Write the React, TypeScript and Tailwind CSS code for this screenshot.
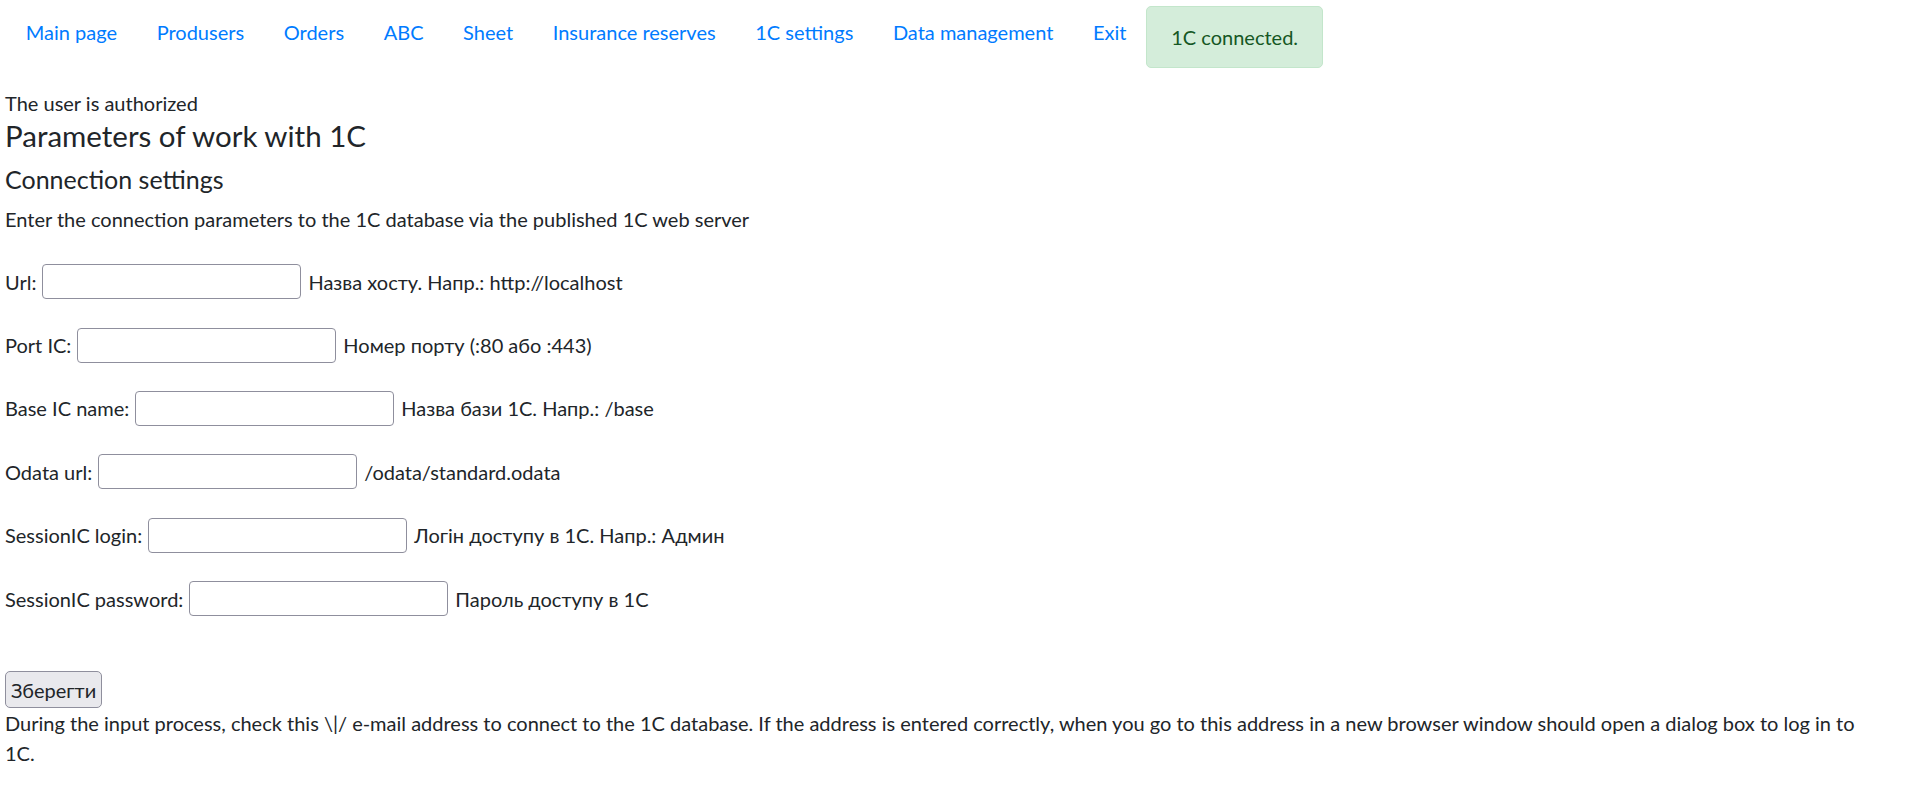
import React from "react";

const navItems = [
	"Main page",
	"Produsers",
	"Orders",
	"ABC",
	"Sheet",
	"Insurance reserves",
	"1C settings",
	"Data management",
	"Exit",
];

const fields = [
	{ key: "url", label: "Url:", hint: "Назва хосту. Напр.: http://localhost" },
	{ key: "port", label: "Port IC:", hint: "Номер порту (:80 або :443)" },
	{ key: "base", label: "Base IC name:", hint: "Назва бази 1С. Напр.: /base" },
	{ key: "odata", label: "Odata url:", hint: "/odata/standard.odata" },
	{ key: "login", label: "SessionIC login:", hint: "Логін доступу в 1С. Напр.: Админ" },
	{ key: "password", label: "SessionIC password:", hint: "Пароль доступу в 1С" },
];

const App = () => {
	return (
		<div className="min-h-screen bg-white text-[20px] leading-[30px] text-[#212529] font-['Lato','Noto_Sans',sans-serif]">
			<nav className="flex items-start pl-[6px] pt-[6px] mb-[20px]">
				{navItems.map((item) => (
					<a key={item} href="#" className="mt-px px-[19.8px] py-[10px] text-[#007bff]">
						{item}
					</a>
				))}
				<div className="rounded-[5px] border border-[#c3e6cb] bg-[#d4edda] px-[24px] py-[15px] text-[#155724]">
					1C connected.
				</div>
			</nav>

			<div className="px-[5px]">
				<div>The user is authorized</div>
				<h4 className="text-[29.5px] leading-[36px] font-normal mb-[10px]">Parameters of work with 1C</h4>
				<h5 className="text-[25px] leading-[30px] font-normal mb-[10px]">Connection settings</h5>
				<p className="mb-[16px]">Enter the connection parameters to the 1C database via the published 1C web server</p>

				<form onSubmit={(e) => e.preventDefault()}>
					{fields.map((field) => (
						<div key={field.key} className="flex h-[63.4px] items-center gap-[6px]">
							<label htmlFor={field.key}>{field.label}</label>
							<input
								id={field.key}
								type="text"
								className="h-[35px] w-[259px] rounded-[4px] border border-[#8f8f9d] bg-white px-[3px] outline-none"
							/>
							<span className="ml-px">{field.hint}</span>
						</div>
					))}
					<button
						type="submit"
						className="mt-[41px] h-[37px] rounded-[5px] border border-[#8f8f9d] bg-[#e9e9ed] px-[5px] leading-[30px]"
					>
						Зберегти
					</button>
				</form>
				<p className="pr-[40px]">
					During the input process, check this \|/ e-mail address to connect to the 1C database. If the address is
					entered correctly, when you go to this address in a new browser window should open a dialog box to log in to
					1C.
				</p>
			</div>
		</div>
	);
};

export default App;
